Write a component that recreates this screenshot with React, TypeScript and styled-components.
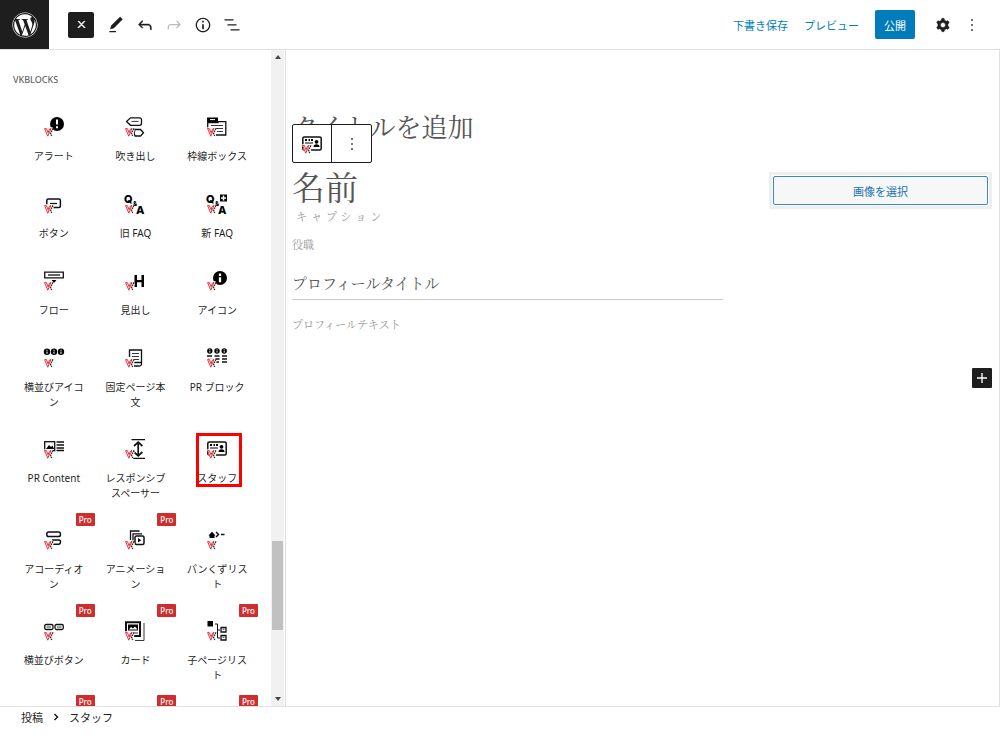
import React from "react";
import styled, { createGlobalStyle, css } from "styled-components";
import { FaWordpress } from "react-icons/fa";

const sans = `"Noto Sans", "Noto Sans CJK JP", sans-serif`;
const serif = `"Liberation Serif", "Noto Serif CJK JP", "Noto Sans CJK JP", serif`;
const ink = "#1e1e1e";
const line = "#e0e0e0";
const blue = "#007cba";

const GlobalStyle = createGlobalStyle`
  *, *::before, *::after { box-sizing: border-box; }
  body { margin: 0; background: #fff; color: ${ink}; font-family: ${sans}; font-size: 11px; }
  button, input { font: inherit; color: inherit; margin: 0; padding: 0; }
  button { background: none; border: 0; cursor: pointer; }
  svg { display: block; overflow: visible; }
`;

const Shell = styled.div`
  display: grid;
  grid-template-rows: 50px minmax(0, 1fr) 20px;
  height: 100vh;
  padding-bottom: 26px;
`;

const Header = styled.header`
  display: flex;
  align-items: center;
  justify-content: space-between;
  border-bottom: 1px solid ${line};
`;

const Tools = styled.div`
  display: flex;
  align-items: center;
`;

const Logo = styled.a`
  display: grid;
  place-items: center;
  width: 49px;
  height: 49px;
  margin-right: 19px;
  background: ${ink};
  color: #fff;
`;

const CloseButton = styled.button`
  display: grid;
  place-items: center;
  width: 26px;
  height: 26px;
  margin-right: 7px;
  border-radius: 2px;
  background: ${ink};
  color: #fff;
`;

const ToolButton = styled.button`
  display: grid;
  place-items: center;
  width: 29px;
  height: 29px;
  color: ${ink};
  &:disabled { color: #bbb; }
`;

const Actions = styled(Tools)`
  padding-right: 14px;
`;

const TextButton = styled.button`
  margin-right: 16px;
  color: ${blue};
  white-space: nowrap;
`;

const PublishButton = styled.button`
  height: 29px;
  width: 40px;
  margin-right: 13px;
  border-radius: 2px;
  background: ${blue};
  color: #fff;
`;

const Workspace = styled.div`
  display: grid;
  grid-template-columns: 286px minmax(0, 1fr);
  min-height: 0;
  border-bottom: 1px solid ${line};
`;

const Sidebar = styled.aside`
  display: grid;
  grid-template-columns: minmax(0, 1fr) 13px;
  min-height: 0;
  padding-right: 1px;
  border-right: 1px solid ${line};
`;

const Library = styled.div`
  overflow: hidden;
  padding: 22px 13px 0;
`;

const CategoryTitle = styled.h2`
  margin: 0 0 13px;
  color: #666;
  font-size: 9px;
  font-weight: 500;
  line-height: 15px;
`;

const BlockGrid = styled.div`
  display: grid;
  grid-template-columns: repeat(3, minmax(0, 1fr));
`;

const BlockButton = styled.button`
  position: relative;
  display: flex;
  flex-direction: column;
  align-items: center;
  min-height: 77px;
  padding: 17px 10px 12px;
`;

const BlockLabel = styled.span`
  margin-top: 12px;
  font-size: 10px;
  line-height: 15px;
  text-align: center;
  word-break: break-all;
`;

const ProBadge = styled.span`
  position: absolute;
  top: 0;
  right: 0;
  width: 19px;
  border-radius: 1px;
  background: #cf2e2e;
  color: #fff;
  font-size: 8px;
  font-weight: 500;
  line-height: 13px;
  text-align: center;
`;

const Highlight = styled.span`
  position: absolute;
  top: 11px;
  left: 20px;
  width: 46px;
  height: 54px;
  border: 3px solid #f00;
`;

const Scrollbar = styled.div`
  display: grid;
  grid-template-rows: 14px minmax(0, 478fr) 89px minmax(0, 62fr) 14px;
  justify-items: center;
  background: #f1f1f1;
`;

const Arrow = styled.span<{ $down?: boolean }>`
  align-self: center;
  border: 3px solid transparent;
  ${({ $down }) =>
    $down
      ? css`border-top: 4px solid #444; border-bottom: 0;`
      : css`border-bottom: 4px solid #444; border-top: 0;`}
`;

const Thumb = styled.span`
  grid-row: 3;
  width: 11px;
  background: #c1c1c1;
`;

const Canvas = styled.main`
  padding: 62px 7px 0 6px;
  border-right: 1px solid ${line};
  font-family: ${serif};
`;

const Field = styled.input<{ $size: number; $line: number; $tone?: string }>`
  display: block;
  width: 100%;
  height: ${({ $line }) => $line}px;
  border: 0;
  outline: 0;
  background: transparent;
  font-size: ${({ $size }) => $size}px;
  font-weight: 400;
  line-height: ${({ $line }) => $line}px;
  &::placeholder { color: ${({ $tone }) => $tone ?? "#555"}; opacity: 1; }
`;

const TitleRow = styled.div`
  position: relative;
`;

const BlockToolbar = styled.div`
  position: absolute;
  top: 12px;
  left: 0;
  display: grid;
  grid-template-columns: 38px 40px;
  height: 39px;
  border: 1px solid ${ink};
  border-radius: 2px;
  background: #fff;
`;

const BlockToolbarButton = styled.button`
  display: grid;
  place-items: center;
  & + & { border-left: 1px solid ${ink}; }
`;

const StaffBlock = styled.section`
  display: grid;
  grid-template-columns: minmax(0, 1fr) 223px;
  gap: 46px;
  align-items: start;
  margin-top: 24px;
`;

const Caption = styled(Field)`
  padding-left: 4px;
  letter-spacing: 4px;
`;

const Position = styled(Field)`
  margin-top: 12px;
`;

const ProfileTitle = styled(Field)`
  margin: 16px 0 15px;
  border-bottom: 1px solid #ccc;
`;

const PhotoFrame = styled.div`
  margin-top: 2px;
  padding: 1px;
  border: 3px solid #eee;
`;

const PhotoButton = styled.button`
  width: 100%;
  height: 29px;
  border: 1px solid #3b8ac4;
  border-radius: 2px;
  background: #f6f7f7;
  color: #2271b1;
  font-family: ${sans};
`;

const AppenderRow = styled.div`
  display: flex;
  justify-content: flex-end;
  margin-top: 33px;
`;

const Appender = styled.button`
  display: grid;
  place-items: center;
  width: 20px;
  height: 20px;
  border-radius: 1px;
  background: ${ink};
  color: #fff;
`;

const Footer = styled.nav`
  display: flex;
  align-items: center;
  gap: 9px;
  padding-left: 21px;
`;

const Crumb = styled.a`
  color: ${ink};
  text-decoration: none;
`;

const paths = {
  edit: "M20.1 5.1L16.9 2 6.2 12.7l-1.3 4.4 4.5-1.3L20.1 5.1zM4 20.8h8v-1.5H4v1.5z",
  undo: "M18.3 11.7c-.6-.6-1.4-.9-2.3-.9H6.7l2.9-3.3-1.1-1-4.5 5L8.5 16l1-1-2.7-2.7H16c.5 0 .9.2 1.3.5 1 1 1 3.4 1 4.5v.3h1.5v-.2c0-1.5 0-4.3-1.5-5.7z",
  redo: "M15.6 6.5l-1.1 1 2.9 3.3H8c-.9 0-1.7.3-2.3.9-1.4 1.5-1.4 4.2-1.4 5.6v.2h1.5v-.3c0-1.1 0-3.5 1-4.5.3-.3.7-.5 1.3-.5h9.2L14.5 15l1.1 1.1 4.6-4.6-4.6-5z",
  info: "M12 3.2c-4.8 0-8.8 3.9-8.8 8.8 0 4.8 3.9 8.8 8.8 8.8 4.8 0 8.8-3.9 8.8-8.8 0-4.8-4-8.8-8.8-8.8zm0 16c-4 0-7.2-3.3-7.2-7.2C4.8 8 8 4.8 12 4.8s7.2 3.3 7.2 7.2c0 4-3.2 7.2-7.2 7.2zM11 17h2v-6h-2v6zm0-8h2V7h-2v2z",
  list: "M13.8 5.2H3v1.5h10.8V5.2zm-3.6 12v1.5H21v-1.5H10.2zm7.2-6H6.6v1.5h10.8v-1.5z",
  cog: "M10.289 4.836A1 1 0 0111.275 4h1.306a1 1 0 01.987.836l.244 1.466c.787.26 1.503.679 2.108 1.218l1.393-.522a1 1 0 011.216.437l.653 1.13a1 1 0 01-.23 1.273l-1.148.944a6.025 6.025 0 010 2.435l1.149.946a1 1 0 01.23 1.272l-.653 1.13a1 1 0 01-1.216.437l-1.394-.522c-.605.54-1.32.958-2.108 1.218l-.244 1.466a1 1 0 01-.987.836h-1.306a1 1 0 01-.986-.836l-.244-1.466a5.995 5.995 0 01-2.108-1.218l-1.394.522a1 1 0 01-1.217-.436l-.653-1.131a1 1 0 01.23-1.272l1.149-.946a6.026 6.026 0 010-2.435l-1.148-.944a1 1 0 01-.23-1.272l.653-1.131a1 1 0 011.217-.437l1.393.522a5.994 5.994 0 012.108-1.218l.244-1.466zM14.929 12a3 3 0 11-6 0 3 3 0 016 0z",
  more: "M13 19h-2v-2h2v2zm0-6h-2v-2h2v2zm0-6h-2V5h2v2z",
  close: "M13 11.8l6.1-6.3-1-1-6.1 6.2-6.1-6.2-1 1 6.1 6.3-6.5 6.7 1 1 6.5-6.6 6.5 6.6 1-1z",
  plus: "M18 11.2h-5.2V6h-1.6v5.2H6v1.6h5.2V18h1.6v-5.2H18z",
};

function Glyph({ name, size = 20, bold = 0 }: { name: keyof typeof paths; size?: number; bold?: number }) {
  return (
    <svg width={size} height={size} viewBox="0 0 24 24" fill="currentColor" stroke="currentColor" strokeWidth={bold} aria-hidden>
      <path fillRule="evenodd" d={paths[name]} />
    </svg>
  );
}

const s = { fill: "none", stroke: "#111", strokeWidth: 1.3 };
const thin = { fill: "none", stroke: "#222", strokeWidth: 0.9 };
const letter = {
  fontFamily: "Inter, Roboto, sans-serif",
  fontWeight: 800,
  fill: "#000",
};

const infoDot = (x: number, y: number, r: number) => (
  <g key={x}>
    <circle cx={x} cy={y} r={r} />
    <path d={`M${x} ${y - r * 0.65}v${r * 0.35}M${x} ${y - r * 0.1}v${r * 0.7}`} stroke="#fff" strokeWidth={r * 0.33} />
  </g>
);

const drawings: Record<string, React.ReactNode> = {
  alert: (
    <>
      <circle cx="13" cy="7" r="7" />
      <path d="M13 2.6v5M13 9.2v2" stroke="#fff" strokeWidth="2" />
    </>
  ),
  balloon: (
    <>
      <path {...s} d="M5.5 .8h9q2 0 2 2v3.500q0 2-2 2h-9L1.500 4.500z" />
      <path {...thin} d="M6.500 4.400h7" />
      <path {...s} d="M10 12.500h5.500l3 3.200-3 3.300H10q-1.500-3.200 0-6.500z" />
    </>
  ),
  frame: (
    <>
      <path d="M0 .5h11v5H0z" />
      <path d="M3 2.6h5" stroke="#fff" />
      <path {...s} d="M.7 2v10M11 4.6h7.800V18H9M.7 5.600h11" />
      <path {...thin} d="M4 8.500h12M4 11.500h12M10 14.500h6" />
    </>
  ),
  button: (
    <>
      <rect {...s} strokeWidth="1.5" x="2.800" y="5" width="13.600" height="8.500" rx="1.500" />
      <path {...s} d="M6 9.500h7" />
    </>
  ),
  faq: (
    <>
      <text {...letter} x="-1" y="8.500" fontSize="11">Q</text>
      <text {...letter} x="8" y="11.500" fontSize="6">&amp;</text>
      <text {...letter} x="11" y="19.500" fontSize="11">A</text>
    </>
  ),
  faqNew: (
    <>
      <text {...letter} x="-1" y="8.500" fontSize="11">Q</text>
      <text {...letter} x="8" y="11.500" fontSize="6">&amp;</text>
      <text {...letter} x="11" y="19.500" fontSize="11">A</text>
      <path d="M13 .5h7v7h-7z" />
      <path d="M16.500 1.500v5M14 4h5" stroke="#fff" strokeWidth="1.500" />
    </>
  ),
  flow: (
    <>
      <path {...s} d="M.7 1.200h18.600v5.600H.7z" />
      <path {...s} d="M4 4h12" />
      <path d="M7.500 9h5L10 12z" />
    </>
  ),
  heading: <path d="M9.500 4h2.500v5h4.500V4H19v12h-2.500v-4.800H12V16H9.500z" />,
  icon: infoDot(13, 7, 7),
  icons: [3, 10, 17].map((x) => infoDot(x, 3.8, 3.2)),
  page: (
    <>
      <path {...s} d="M4.500 9V2h12v12.500H9M16.500 14v2.500q-1 2-3 1.500H9" />
      <path {...thin} d="M7 5.500h7M7 8.500h7M9 11.500h5" />
    </>
  ),
  prBlocks: (
    <>
      {[2.8, 10, 17.2].map((x) => infoDot(x, 3, 2.7))}
      <path {...s} d="M0 8h5M7.500 8h5M15 8h5M1 11h4M8 11h4.500M15 11h5M15 14h5M9 14h3" />
    </>
  ),
  prContent: (
    <>
      <rect {...s} x=".7" y="2.700" width="10" height="9" />
      <path d="M2 10l3-4 2 2 1.500-1.500L10 10z" />
      <path {...s} d="M12.500 3H20M12.500 6H20M12.500 9H20M12.500 11.500H20" />
    </>
  ),
  spacer: (
    <>
      <path {...s} d="M6.500 .7H20M6.500 19.300H20" />
      <path {...s} strokeWidth="1.700" d="M13.200 3.500v13M9 7l4.200-3.800L17.400 7M9 13l4.200 3.800 4.200-3.800" />
    </>
  ),
  staff: (
    <>
      <rect {...s} strokeWidth="1.500" x=".8" y="3" width="18.400" height="13" rx="1.500" />
      <path d="M3 5h2v2H3zM6.500 5h1.500v2H6.500zM9 5h2v2H9zM3 8.500h8v1H3z" />
      <circle cx="14.500" cy="7.800" r="1.900" />
      <path d="M11.500 13q0-2.800 3-2.800t3 2.800z" />
    </>
  ),
  accordion: (
    <>
      <rect {...s} strokeWidth="1.500" x="2.800" y="2" width="13.600" height="4.600" rx="1.800" />
      <path {...s} strokeWidth="1.500" d="M8 10h7q1.500 0 1.500 2t-1.500 2.300H8" />
    </>
  ),
  animation: (
    <>
      <path {...s} d="M5.500 10V1h9M8 12V3.800h9" />
      <rect {...s} strokeWidth="1.500" x="10" y="6" width="9" height="8.500" rx="1.500" />
      <path d="M13 8v4.500l3.200-2.200z" />
    </>
  ),
  breadcrumb: (
    <>
      <path d="M1.500 5.500l3.500-3.800 3.500 3.800H7.500V8h-5V5.500z" />
      <path {...s} strokeWidth="1.500" d="M9 2l2.500 2.500L9 7M14 4.600h3.500" />
    </>
  ),
  buttons: (
    <>
      <rect {...s} x=".7" y="3.500" width="8.300" height="5" rx="1.500" />
      <rect {...s} x="11" y="3.500" width="8.300" height="5" rx="1.500" />
      <path {...thin} d="M2.500 6h4.500M13 6h4.500" />
    </>
  ),
  card: (
    <>
      <path {...s} strokeWidth="2" d="M1 12V1.200h14V15H9" />
      <path d="M3 3.500h10v6H3z" />
      <path d="M4 8.500l2-2.500 2 1.500 2-2 2.500 3z" fill="#fff" />
      <path {...thin} d="M19 2v17.500H10M9 12h4" />
    </>
  ),
  children: (
    <>
      <path d="M.5 0h5.500v5.500H.5z" />
      <path {...s} strokeWidth="1" d="M8 3h2.500v14H13M10.500 9H13" />
      <path {...s} d="M14 6.500h5v4.500h-5zM14 14.500h5v4.500h-5z" />
      <path {...thin} d="M15.500 8.200h2M15.500 16.200h2" />
    </>
  ),
};

function BlockIcon({ name }: { name: string }) {
  return (
    <svg width="20" height="20" viewBox="0 0 20 20" aria-hidden>
      {drawings[name]}
      <path d="M0 10.200h8.500l1 3-1.300 6.800H3z" fill="#fff" />
      <path d="M.6 11.600h1.800l1.700 4.200 1.300-3.600M.6 11.600l3.200 7.600 3.200-7.900-1.600.9" fill="none" stroke="#e8303a" strokeWidth="1" />
      <path d="M9 11.300L6.500 16.500l1.300 2.500" fill="none" stroke="#333" strokeWidth="1.300" strokeDasharray="1.800 .6" />
    </svg>
  );
}

type Block = { label: string; icon: string; pro?: boolean; marked?: boolean };

const blocks: Block[] = [
  { label: "アラート", icon: "alert" },
  { label: "吹き出し", icon: "balloon" },
  { label: "枠線ボックス", icon: "frame" },
  { label: "ボタン", icon: "button" },
  { label: "旧 FAQ", icon: "faq" },
  { label: "新 FAQ", icon: "faqNew" },
  { label: "フロー", icon: "flow" },
  { label: "見出し", icon: "heading" },
  { label: "アイコン", icon: "icon" },
  { label: "横並びアイコン", icon: "icons" },
  { label: "固定ページ本文", icon: "page" },
  { label: "PR ブロック", icon: "prBlocks" },
  { label: "PR Content", icon: "prContent" },
  { label: "レスポンシブスペーサー", icon: "spacer" },
  { label: "スタッフ", icon: "staff", marked: true },
  { label: "アコーディオン", icon: "accordion", pro: true },
  { label: "アニメーション", icon: "animation", pro: true },
  { label: "パンくずリスト", icon: "breadcrumb" },
  { label: "横並びボタン", icon: "buttons", pro: true },
  { label: "カード", icon: "card", pro: true },
  { label: "子ページリスト", icon: "children", pro: true },
];

export default function App() {
  return (
    <>
      <GlobalStyle />
      <Shell>
        <Header>
          <Tools>
            <Logo href="#" aria-label="WordPress"><FaWordpress size={26} /></Logo>
            <CloseButton aria-label="閉じる"><Glyph name="close" size={11} bold={2} /></CloseButton>
            <ToolButton aria-label="編集"><Glyph name="edit" /></ToolButton>
            <ToolButton aria-label="元に戻す"><Glyph name="undo" bold={0.5} /></ToolButton>
            <ToolButton aria-label="やり直す" disabled><Glyph name="redo" /></ToolButton>
            <ToolButton aria-label="詳細"><Glyph name="info" /></ToolButton>
            <ToolButton aria-label="リスト表示"><Glyph name="list" /></ToolButton>
          </Tools>
          <Actions>
            <TextButton>下書き保存</TextButton>
            <TextButton>プレビュー</TextButton>
            <PublishButton>公開</PublishButton>
            <ToolButton aria-label="設定"><Glyph name="cog" bold={0.6} /></ToolButton>
            <ToolButton aria-label="オプション"><Glyph name="more" /></ToolButton>
          </Actions>
        </Header>

        <Workspace>
          <Sidebar>
            <Library>
              <CategoryTitle>VKBLOCKS</CategoryTitle>
              <BlockGrid>
                {blocks.map((b) => (
                  <BlockButton key={b.label}>
                    <BlockIcon name={b.icon} />
                    <BlockLabel>{b.label}</BlockLabel>
                    {b.pro && <ProBadge>Pro</ProBadge>}
                    {b.marked && <Highlight />}
                  </BlockButton>
                ))}
                {[0, 1, 2].map((i) => (
                  <BlockButton key={i} aria-label="Pro">
                    <ProBadge>Pro</ProBadge>
                  </BlockButton>
                ))}
              </BlockGrid>
            </Library>
            <Scrollbar aria-hidden>
              <Arrow />
              <span />
              <Thumb />
              <span />
              <Arrow $down />
            </Scrollbar>
          </Sidebar>

          <Canvas>
            <TitleRow>
              <Field $size={26} $line={34} placeholder="タイトルを追加" aria-label="タイトルを追加" />
              <BlockToolbar>
                <BlockToolbarButton aria-label="スタッフ"><BlockIcon name="staff" /></BlockToolbarButton>
                <BlockToolbarButton aria-label="オプション"><Glyph name="more" /></BlockToolbarButton>
              </BlockToolbar>
            </TitleRow>
            <StaffBlock>
              <div>
                <Field $size={33} $line={39} placeholder="名前" aria-label="名前" />
                <Caption $size={11} $line={16} $tone="#999" placeholder="キャプション" aria-label="キャプション" />
                <Position $size={11} $line={16} $tone="#999" placeholder="役職" aria-label="役職" />
                <ProfileTitle $size={15} $line={31} placeholder="プロフィールタイトル" aria-label="プロフィールタイトル" />
                <Field $size={11} $line={20} $tone="#999" placeholder="プロフィールテキスト" aria-label="プロフィールテキスト" />
              </div>
              <PhotoFrame>
                <PhotoButton>画像を選択</PhotoButton>
              </PhotoFrame>
            </StaffBlock>
            <AppenderRow>
              <Appender aria-label="ブロックを追加"><Glyph name="plus" size={20} /></Appender>
            </AppenderRow>
          </Canvas>
        </Workspace>

        <Footer aria-label="パンくず">
          <Crumb href="#">投稿</Crumb>
          <svg width="8" height="8" viewBox="0 0 8 8" aria-hidden>
            <path d="M2.500 1l3 3-3 3" fill="none" stroke={ink} strokeWidth="1.500" />
          </svg>
          <Crumb href="#">スタッフ</Crumb>
        </Footer>
      </Shell>
    </>
  );
}
